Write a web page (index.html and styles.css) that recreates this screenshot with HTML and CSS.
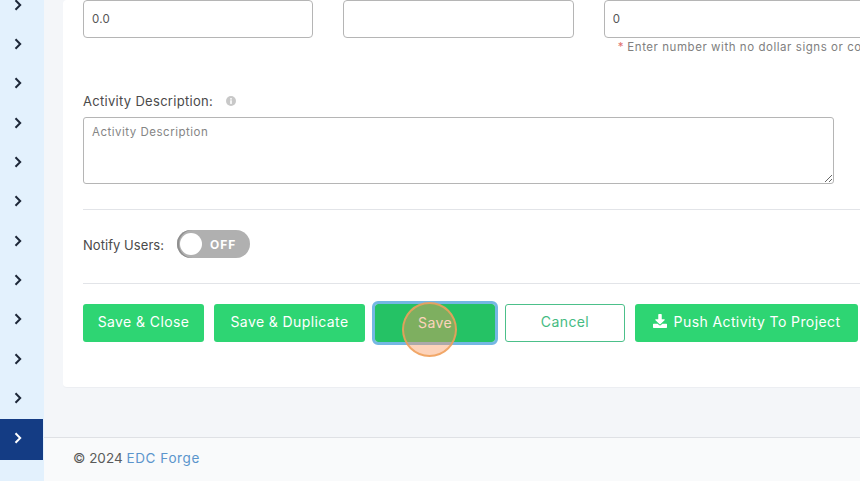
FILE: index.html
```html
<!DOCTYPE html>
<html lang="en">

<head>
    <meta charset="UTF-8">
    <meta name="viewport" content="width=device-width, initial-scale=1.0">
    <title>Activity</title>
    <link rel="stylesheet" href="styles.css">
</head>

<body>
    <div class="layout">
        <aside class="sidebar">
            <a class="side-item"><svg class="chevron" viewBox="0 0 8 12"><path d="M1.5 1.2 6.2 6l-4.700 4.800"/></svg></a>
            <a class="side-item"><svg class="chevron" viewBox="0 0 8 12"><path d="M1.5 1.2 6.2 6l-4.700 4.800"/></svg></a>
            <a class="side-item"><svg class="chevron" viewBox="0 0 8 12"><path d="M1.5 1.2 6.2 6l-4.700 4.800"/></svg></a>
            <a class="side-item"><svg class="chevron" viewBox="0 0 8 12"><path d="M1.5 1.2 6.2 6l-4.700 4.800"/></svg></a>
            <a class="side-item"><svg class="chevron" viewBox="0 0 8 12"><path d="M1.5 1.2 6.2 6l-4.700 4.800"/></svg></a>
            <a class="side-item"><svg class="chevron" viewBox="0 0 8 12"><path d="M1.5 1.2 6.2 6l-4.700 4.800"/></svg></a>
            <a class="side-item"><svg class="chevron" viewBox="0 0 8 12"><path d="M1.5 1.2 6.2 6l-4.700 4.800"/></svg></a>
            <a class="side-item"><svg class="chevron" viewBox="0 0 8 12"><path d="M1.5 1.2 6.2 6l-4.700 4.800"/></svg></a>
            <a class="side-item"><svg class="chevron" viewBox="0 0 8 12"><path d="M1.5 1.2 6.2 6l-4.700 4.800"/></svg></a>
            <a class="side-item"><svg class="chevron" viewBox="0 0 8 12"><path d="M1.5 1.2 6.2 6l-4.700 4.800"/></svg></a>
            <a class="side-item"><svg class="chevron" viewBox="0 0 8 12"><path d="M1.5 1.2 6.2 6l-4.700 4.800"/></svg></a>
            <a class="side-item active"><svg class="chevron" viewBox="0 0 8 12"><path d="M1.5 1.2 6.2 6l-4.700 4.800"/></svg></a>
        </aside>

        <main class="main">
            <div class="content">
                <section class="card">
                    <div class="fields">
                        <input class="field" type="text" value="0.0">
                        <input class="field" type="text">
                        <div>
                            <input class="field field-wide" type="text" value="0">
                            <p class="hint"><span class="req">*</span> Enter number with no dollar signs or commas</p>
                        </div>
                    </div>

                    <div class="desc-label">
                        <label>Activity Description:</label>
                        <svg class="info" viewBox="0 0 10 10"><circle cx="5" cy="5" r="5" fill="#c8c8c8"/><rect x="4.2" y="4.3" width="1.6" height="3.6" fill="#fff"/><rect x="4.2" y="2.1" width="1.6" height="1.5" fill="#fff"/></svg>
                    </div>
                    <textarea class="desc" placeholder="Activity Description"></textarea>

                    <div class="notify">
                        <label>Notify Users:</label>
                        <div class="toggle"><span class="thumb"></span><span class="toggle-text">OFF</span></div>
                    </div>

                    <div class="actions">
                        <button class="btn btn-close">Save &amp; Close</button>
                        <button class="btn btn-dup">Save &amp; Duplicate</button>
                        <button class="btn btn-save">Save</button>
                        <button class="btn btn-cancel">Cancel</button>
                        <button class="btn btn-push">
                            <svg class="dl" viewBox="0 0 512 512"><path d="M216 0h80c13.300 0 24 10.700 24 24v168h87.700c17.800 0 26.700 21.500 14.100 34.100L269.700 378.300c-7.500 7.500-19.800 7.500-27.300 0L90.100 226.100c-12.600-12.600-3.700-34.100 14.100-34.100H192V24c0-13.300 10.700-24 24-24zm296 376v112c0 13.300-10.700 24-24 24H24c-13.300 0-24-10.700-24-24V376c0-13.300 10.700-24 24-24h146.700l49 49c20.100 20.100 52.500 20.100 72.600 0l49-49H488c13.300 0 24 10.700 24 24z"/></svg>
                            Push Activity To Project
                        </button>
                    </div>
                </section>
            </div>

            <footer class="footer">© 2024 <a class="footer-link">EDC Forge</a></footer>
        </main>
    </div>

    <div class="click-mark"></div>
</body>

</html>
```

FILE: styles.css
```css
* {
    box-sizing: border-box;
}

html,
body {
    margin: 0;
    height: 481px;
    overflow: hidden;
}

body {
    font-family: Inter, "Open Sans", sans-serif;
    font-size: 13px;
    color: #4a4a4a;
    background-color: #f4f6f9;
}

.layout {
    display: flex;
    height: 481px;
}

/* sidebar */
.sidebar {
    flex: 0 0 44px;
    background-color: #e3f1fd;
    margin-top: -15px;
}

.side-item {
    display: flex;
    align-items: center;
    width: 43px;
    height: 39.35px;
    padding-left: 14px;
}

.side-item.active {
    height: 41px;
    margin-top: 1px;
    padding-bottom: 3px;
    background-color: #143c84;
}

.chevron {
    width: 8px;
    height: 12px;
    fill: none;
    stroke: #1d2738;
    stroke-width: 2;
}

.active .chevron {
    stroke: #fff;
}

/* main */
.main {
    flex: 1;
    min-width: 0;
    display: flex;
    flex-direction: column;
}

.content {
    flex: 0 0 437px;
    padding-left: 19px;
}

.card {
    width: 900px;
    height: 388px;
    padding: 0 0 0 20px;
    background-color: #fff;
    border-radius: 4px;
    border-bottom: 1px solid #eceef2;
}

.fields {
    display: flex;
    gap: 30px;
    height: 56px;
}

.field {
    display: block;
    width: 230.4px;
    height: 38px;
    padding: 0 8px;
    border: 1px solid #b5b5b5;
    border-radius: 4px;
    font-family: inherit;
    font-size: 11.5px;
    letter-spacing: 0.3px;
    color: #555;
}

.field-wide {
    width: 300px;
}

.hint {
    margin: 2px 0 0 14px;
    font-size: 11.5px;
    line-height: 14px;
    letter-spacing: 0.55px;
    color: #808080;
    white-space: nowrap;
}

.req {
    letter-spacing: 0;
    color: #e0736f;
}

.desc-label {
    display: flex;
    align-items: center;
    gap: 13px;
    height: 18px;
    margin-top: 36px;
    letter-spacing: 0.3px;
}

.info {
    width: 10px;
    height: 10px;
}

.desc {
    display: block;
    width: 751px;
    height: 67px;
    margin-top: 7px;
    padding: 7px 8px;
    border: 1px solid #b5b5b5;
    border-radius: 3px;
    font-family: inherit;
    font-size: 11.5px;
    letter-spacing: 0.5px;
}

.desc::placeholder {
    color: #858585;
}

.notify {
    display: flex;
    align-items: center;
    gap: 13px;
    height: 75px;
    margin-top: 25px;
    padding-bottom: 3px;
    border-top: 1px solid #e2e4e8;
    border-bottom: 1px solid #e2e4e8;
    letter-spacing: 0.05px;
}

.toggle {
    display: flex;
    align-items: center;
    width: 73px;
    height: 28px;
    margin-bottom: 2px;
    padding-left: 3px;
    border-radius: 14px;
    background-color: #b0b0b0;
    box-shadow: inset 2px 0 0 #8f8f8f;
}

.thumb {
    width: 22px;
    height: 22px;
    border-radius: 50%;
    background-color: #fff;
}

.toggle-text {
    margin-left: 8px;
    font-size: 12px;
    font-weight: 700;
    letter-spacing: 1px;
    color: #fff;
}

.actions {
    display: flex;
    gap: 10px;
    margin-top: 20px;
}

.btn {
    display: flex;
    align-items: center;
    justify-content: center;
    flex: none;
    height: 38px;
    padding: 0 0 4px;
    border: none;
    border-radius: 3px;
    background-color: #2ed573;
    color: #fff;
    font-family: inherit;
    font-size: 14px;
    letter-spacing: 0.4px;
}

.btn-close {
    width: 121px;
}

.btn-dup {
    width: 151px;
}

.btn-save {
    width: 120px;
    padding-bottom: 2px;
    background-color: #25c265;
    outline: 3px solid #74b7e3;
}

.btn-cancel {
    width: 120px;
    background-color: #fff;
    border: 1px solid #4cc08a;
    color: #45bb82;
}

.btn-push {
    width: 223px;
    gap: 7px;
}

.dl {
    width: 14px;
    height: 14px;
    fill: #fff;
}

/* footer */
.footer {
    flex: 1;
    padding: 11px 0 0 29px;
    border-top: 1px solid #dfe1e5;
    background-color: #f9fafb;
    font-size: 13.5px;
    line-height: 18px;
    color: #5a5a5a;
}

.footer-link {
    color: #5b95cc;
    letter-spacing: 0.6px;
}

/* click marker over the Save button */
.click-mark {
    position: absolute;
    left: 402px;
    top: 302px;
    width: 55px;
    height: 55px;
    border: 2px solid rgba(240, 160, 90, 0.85);
    border-radius: 50%;
    background-color: rgba(250, 150, 90, 0.42);
}
```
